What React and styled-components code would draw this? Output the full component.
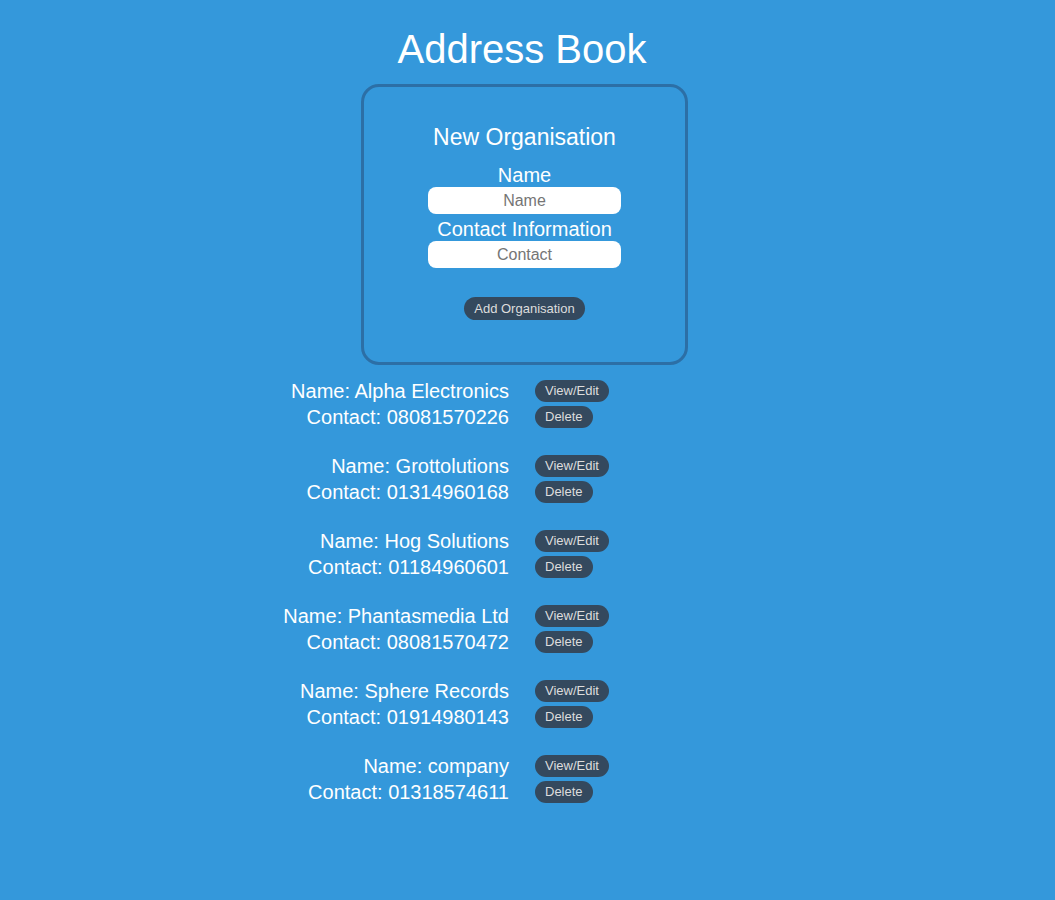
import React from "react";
import styled, { createGlobalStyle } from "styled-components";

const organisations = [
  { name: "Alpha Electronics", contact: "08081570226" },
  { name: "Grottolutions", contact: "01314960168" },
  { name: "Hog Solutions", contact: "01184960601" },
  { name: "Phantasmedia Ltd", contact: "08081570472" },
  { name: "Sphere Records", contact: "01914980143" },
  { name: "company", contact: "01318574611" },
];

function App() {
  return (
    <Page>
      <GlobalStyle />
      <Title>Address Book</Title>
      <Card>
        <CardTitle>New Organisation</CardTitle>
        <Label htmlFor="org-name">Name</Label>
        <Input id="org-name" placeholder="Name" />
        <Label htmlFor="org-contact" $spaced>
          Contact Information
        </Label>
        <Input id="org-contact" placeholder="Contact" />
        <AddButton>Add Organisation</AddButton>
      </Card>
      <List>
        {organisations.map((org) => (
          <OrgRow key={org.name}>
            <Line>Name: {org.name}</Line>
            <SmallButton>View/Edit</SmallButton>
            <Line>Contact: {org.contact}</Line>
            <SmallButton>Delete</SmallButton>
          </OrgRow>
        ))}
      </List>
    </Page>
  );
}

const GlobalStyle = createGlobalStyle`
  body {
    margin: 0;
    background-color: #3498db;
    font-family: "Liberation Sans", Arial, sans-serif;
    color: #ffffff;
  }
`;

const Page = styled.div`
  width: 1044px;
  min-height: 900px;
  display: flex;
  flex-direction: column;
`;

const Title = styled.h1`
  margin: 26px 0 12px;
  font-size: 40px;
  line-height: 46px;
  font-weight: normal;
  text-align: center;
`;

const Card = styled.div`
  box-sizing: border-box;
  width: 327px;
  margin-left: calc(50% - 161px);
  padding: 37px 0 42px;
  border: 3px solid #2c6fa6;
  border-radius: 18px;
  display: flex;
  flex-direction: column;
  align-items: center;
`;

const CardTitle = styled.h3`
  margin: 0 0 14px;
  font-size: 23px;
  line-height: 26px;
  font-weight: normal;
`;

const Label = styled.label`
  display: block;
  margin-top: ${(p) => (p.$spaced ? "4px" : "0")};
  font-size: 20px;
  line-height: 23px;
`;

const Input = styled.input`
  box-sizing: border-box;
  width: 193px;
  height: 27px;
  border: none;
  border-radius: 8px;
  background: #ffffff;
  font-family: "Liberation Sans", Arial, sans-serif;
  font-size: 16px;
  text-align: center;
  color: #333;
  outline: none;

  &::placeholder {
    color: #757575;
  }
`;

const Button = styled.button`
  box-sizing: border-box;
  padding: 0 10px 1px;
  border: none;
  background-color: #34495e;
  color: #dddddd;
  font-family: "Liberation Sans", Arial, sans-serif;
  font-size: 13px;
  cursor: pointer;
`;

const AddButton = styled(Button)`
  margin-top: 29px;
  height: 23px;
  border-radius: 12px;
`;

const List = styled.div`
  margin-top: 13px;
  display: flex;
  flex-direction: column;
  gap: 23px;
`;

const OrgRow = styled.div`
  display: grid;
  grid-template-columns: 1fr 1fr;
  grid-auto-rows: 26px;
  column-gap: 26px;
  align-items: center;
`;

const Line = styled.div`
  font-size: 20px;
  line-height: 26px;
  text-align: right;
`;

const SmallButton = styled(Button)`
  justify-self: start;
  height: 22px;
  border-radius: 11px;
`;

export default App;
